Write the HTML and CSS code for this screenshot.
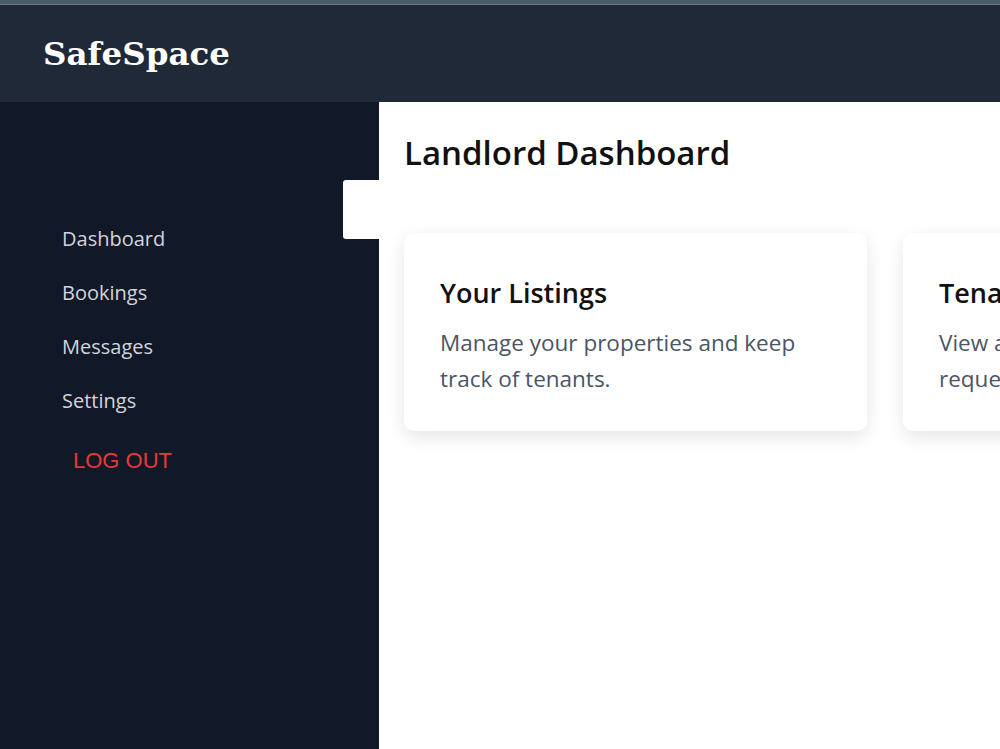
FILE: index.html
```html
<!DOCTYPE html>
<html lang="en">
<head>
    <meta charset="UTF-8">
    <meta name="viewport" content="width=device-width, initial-scale=1.0">
    <title>SafeSpace - Landlord Dashboard</title>
    <link rel="stylesheet" href="styles.css">
</head>
<body>

    <!-- Top Bar -->
    <header class="navbar">
        <div class="logo">SafeSpace</div>
    </header>

    <div class="layout">
        <!-- Sidebar -->
        <aside class="sidebar">
            <button class="sidebar-toggle" aria-label="Toggle sidebar"></button>
            <ul class="nav-links">
                <li><a href="#">Dashboard</a></li>
                <li><a href="#">Bookings</a></li>
                <li><a href="#">Messages</a></li>
                <li><a href="#">Settings</a></li>
            </ul>
            <button class="logout">LOG OUT</button>
        </aside>

        <!-- Main Content -->
        <main class="content">
            <h1>Landlord Dashboard</h1>
            <div class="cards">
                <div class="card">
                    <h2>Your Listings</h2>
                    <p>Manage your properties and keep track of tenants.</p>
                </div>
                <div class="card">
                    <h2>Tenant Requests</h2>
                    <p>View and respond to booking requests from tenants.</p>
                </div>
            </div>
        </main>
    </div>

</body>
</html>
```

FILE: styles.css
```css
body {
    margin: 0;
    font-family: "Open Sans", "Noto Sans", sans-serif;
    background: white;
    border-top: 4px solid #4b5d68;
    overflow: hidden;
}

/* Top Bar */
.navbar {
    height: 98px;
    background: #1f2937;
    border-top: 1px solid #6b7c86;
    box-sizing: border-box;
    display: flex;
    align-items: center;
    padding-left: 43px;
}

.logo {
    font-family: "DejaVu Serif", Georgia, serif;
    font-weight: bold;
    font-size: 32.5px;
    color: white;
}

.layout {
    display: flex;
    min-height: calc(100vh - 102px);
}

/* Sidebar */
.sidebar {
    position: relative;
    width: 379px;
    flex-shrink: 0;
    background: #111827;
    padding-top: 125px;
    box-sizing: border-box;
}

.sidebar-toggle {
    position: absolute;
    top: 78px;
    right: 0;
    width: 36px;
    height: 59px;
    border: none;
    background: white;
    border-radius: 3px 0 0 3px;
    cursor: pointer;
}

.nav-links {
    list-style: none;
    margin: 0;
    padding: 0 0 0 62px;
}

.nav-links li {
    margin-bottom: 30px;
}

.nav-links a {
    display: block;
    color: #d1d5db;
    text-decoration: none;
    font-size: 20px;
    line-height: 24px;
}

.logout {
    margin: 0 0 0 62px;
    padding: 5px 11px;
    background: none;
    border: none;
    color: #e53935;
    font-family: "Liberation Sans", Arial, sans-serif;
    font-size: 22px;
    cursor: pointer;
}

/* Main Content */
.content {
    padding: 31px 0 0 25px;
    white-space: nowrap;
}

.content h1 {
    margin: 0;
    font-size: 33px;
    line-height: 40px;
    font-weight: 600;
    color: #111;
}

.cards {
    display: flex;
    gap: 36px;
    margin-top: 60px;
}

.card {
    width: 463px;
    height: 198px;
    box-sizing: border-box;
    padding: 44px 36px;
    background: white;
    border-radius: 10px;
    box-shadow: 0 6px 18px rgba(0, 0, 0, 0.1);
    white-space: normal;
    flex-shrink: 0;
}

.card h2 {
    margin: 0 0 16px;
    font-size: 27px;
    line-height: 32px;
    font-weight: 600;
    color: #111;
}

.card p {
    margin: 0;
    font-size: 22.5px;
    line-height: 36px;
    color: #4b5563;
}
```
